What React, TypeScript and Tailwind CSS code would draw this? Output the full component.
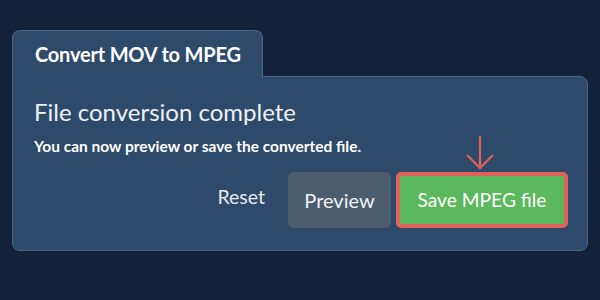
import React from "react";

export default function App() {
  return (
    <div
      className="w-[600px] h-[300px] bg-[#12223a] pt-[30px] px-[12px] flex flex-col"
      style={{ fontFamily: "Lato, 'Noto Sans', sans-serif" }}
    >
      <div className="relative z-10 w-[251px] h-[47px] -mb-px rounded-t-[8px] border border-b-0 border-[#4a6585] bg-[#2e4a6a] flex items-center pl-[22px]">
        <span className="text-white font-bold text-[20px] tracking-[-0.2px]">Convert MOV to MPEG</span>
      </div>
      <div className="w-[576px] h-[175px] rounded-b-[8px] rounded-tr-[8px] border border-[#4a6585] bg-[#2e4a6a] pl-[21px] pr-[19px] pt-[20px] flex flex-col">
        <h1 className="text-[#eef1f5] text-[24px] leading-[30px]">File conversion complete</h1>
        <p className="text-white font-bold text-[15.5px] leading-[20px] mt-[9px]">
          You can now preview or save the converted file.
        </p>
        <div className="flex items-center justify-end mt-[16px]">
          <button className="text-[#e6eaf0] text-[19.5px] mr-[23px] -mt-[7px]">Reset</button>
          <button className="w-[103px] h-[56px] rounded-[5px] bg-[#4b5c6e] text-[#eef1f5] text-[20px]">
            Preview
          </button>
          <div className="relative ml-[5px]">
            <svg
              className="absolute left-[69px] -top-[37px]"
              width="30"
              height="36"
              viewBox="0 0 30 36"
              fill="none"
              stroke="#e0605a"
              strokeWidth="2.2"
            >
              <path d="M15 1 V34" />
              <path d="M2 20 L15 33 L28 20" />
            </svg>
            <button className="w-[172px] h-[56px] rounded-[5px] border-[4px] border-[#e0605a] bg-[#5cb85c] text-white text-[19.2px]">
              Save MPEG file
            </button>
          </div>
        </div>
      </div>
    </div>
  );
}
